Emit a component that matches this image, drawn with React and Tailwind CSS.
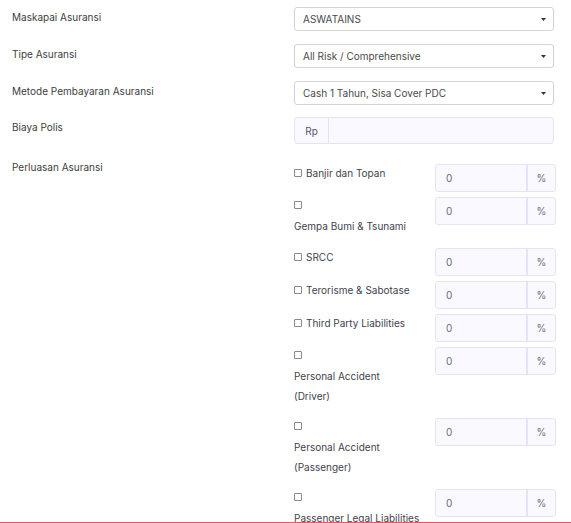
const selects = [
  { label: 'Maskapai Asuransi', value: 'ASWATAINS' },
  { label: 'Tipe Asuransi', value: 'All Risk / Comprehensive' },
  { label: 'Metode Pembayaran Asuransi', value: 'Cash 1 Tahun, Sisa Cover PDC' },
];

// stacked: checkbox sits on its own line, label text below it
const perluasan = [
  { id: 'banjir', lines: ['Banjir dan Topan'] },
  { id: 'gempa', lines: ['Gempa Bumi & Tsunami'], stacked: true },
  { id: 'srcc', lines: ['SRCC'] },
  { id: 'teror', lines: ['Terorisme & Sabotase'] },
  { id: 'tpl', lines: ['Third Party Liabilities'] },
  { id: 'pa_driver', lines: ['Personal Accident', '(Driver)'], stacked: true },
  { id: 'pa_pass', lines: ['Personal Accident', '(Passenger)'], stacked: true },
  { id: 'pll', lines: ['Passenger Legal Liabilities'], stacked: true },
];

function Check() {
  return (
    <input
      type="checkbox"
      className="appearance-none w-[8px] h-[8px] border border-[#8a8a8a] rounded-[1px] bg-white shrink-0"
    />
  );
}

function SelectBox({ value }) {
  return (
    <div className="w-[260px] h-[24px] border border-[#d4d4d4] rounded-[3px] bg-white flex items-center justify-between pl-[8px] pr-[7px] text-[#4a4a4a]">
      <span>{value}</span>
      <svg width="5" height="3" viewBox="0 0 5 3">
        <path d="M0 0h5L2.5 3z" fill="#333" />
      </svg>
    </div>
  );
}

function PercentInput() {
  return (
    <div className="w-[121px] h-[28px] flex border border-[#e4e4f6] rounded-[3px] bg-[#f9f9ff] shrink-0">
      <div className="flex-1 flex items-center pl-[10px] text-[#6a6a80]">0</div>
      <div className="w-[29px] border-l-2 border-[#e4e4f6] flex items-center justify-center text-[#6a6a80]">%</div>
    </div>
  );
}

export default function App() {
  return (
    <div className="h-[523px] overflow-hidden bg-white font-['Inter',sans-serif] text-[10px] leading-[14px] text-[#3d3d3d] relative">
      <div className="pl-3 pt-[7px]">
        {selects.map((s, i) => (
          <div key={s.label} className={`flex ${i < 2 ? 'mb-[13px]' : 'mb-3'}`}>
            <div className="w-[282px] pt-[3px]">{s.label}</div>
            <SelectBox value={s.value} />
          </div>
        ))}

        <div className="flex mb-4">
          <div className="w-[282px] pt-[3px]">Biaya Polis</div>
          <div className="w-[260px] h-[27px] flex border border-[#e4e4f6] rounded-[3px] bg-[#f9f9ff]">
            <div className="w-[34px] border-r border-[#e4e4f6] flex items-center justify-center text-[#55556a]">Rp</div>
            <div className="flex-1" />
          </div>
        </div>

        <div className="flex">
          <div className="w-[282px]">Perluasan Asuransi</div>
          <div className="pt-[4px]">
            {perluasan.map((p) => (
              <div key={p.id} className="flex mb-[5px]">
                <div className="w-[141px] text-[#3f3f4e]">
                  {p.stacked ? (
                    <div className="pb-[7px]">
                      <div className="h-[14px] pt-[2px] flex items-center">
                        <Check />
                      </div>
                      <div className="mt-[5px] leading-[20px]">
                        {p.lines.map((l) => (
                          <div key={l}>{l}</div>
                        ))}
                      </div>
                    </div>
                  ) : (
                    <div className="pt-[2px] flex items-center gap-[4px]">
                      <Check />
                      <span>{p.lines[0]}</span>
                    </div>
                  )}
                </div>
                <PercentInput />
              </div>
            ))}
          </div>
        </div>
      </div>
      <div className="absolute left-0 right-0 bottom-0 h-px bg-[#f0566a]" />
    </div>
  );
}
